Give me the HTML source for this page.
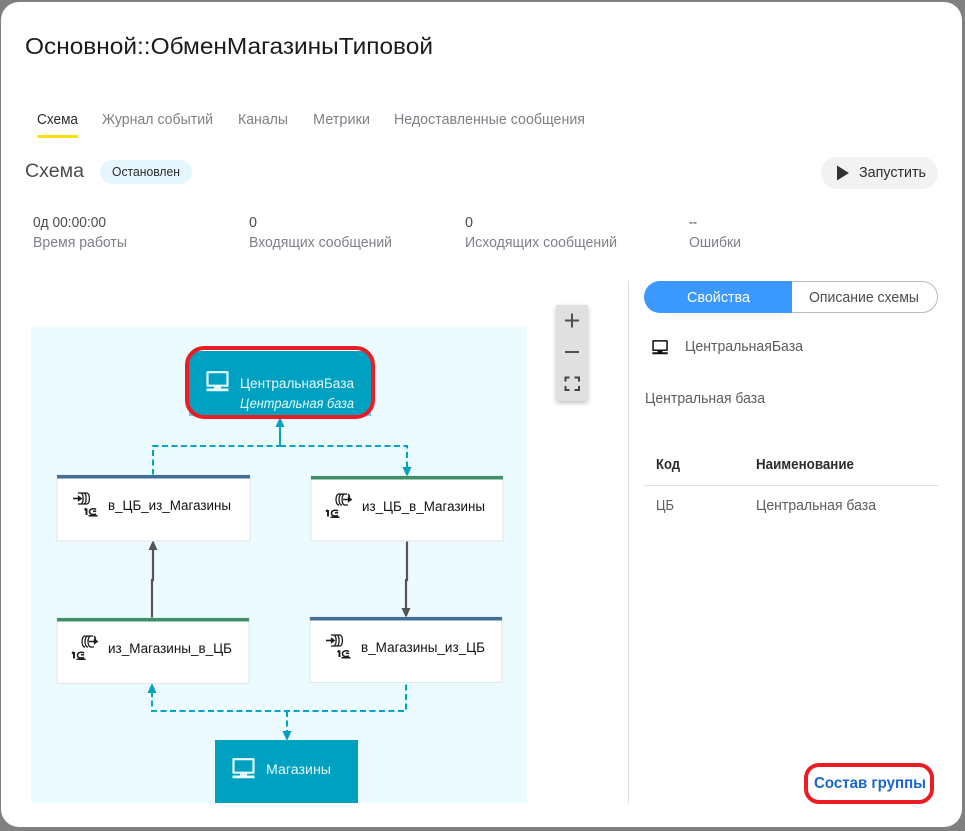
<!DOCTYPE html>
<html><head><meta charset="utf-8"><style>
html,body{margin:0;padding:0;background:#808080;width:965px;height:831px;overflow:hidden}
svg{display:block}
text{font-family:"Liberation Sans",sans-serif;white-space:pre}
</style></head><body>
<svg width="965" height="831" viewBox="0 0 965 831" xmlns="http://www.w3.org/2000/svg">
<defs>
<filter id="sh" x="-30%" y="-10%" width="160%" height="125%"><feDropShadow dx="0" dy="2" stdDeviation="2.500" flood-color="#000" flood-opacity=".25"/></filter>
<g id="mon"><path d="M1.500 1.200h20v13.500h-20z" fill="none" stroke="currentColor" stroke-width="2.200" stroke-linejoin="round"/><path d="M8 15h7v2.500H8zM0.500 17.500h22v2.800H0.500z" fill="currentColor"/></g>
<g id="qin" fill="none" stroke="#1c1c1c" stroke-width="1.300"><path d="M6 2h9M6 13h9"/><path d="M9 2c2.800 1 2.800 10 0 11M12 2c2.800 1 2.800 10 0 11M15 2c3.200 1 3.200 10 0 11"/><path d="M1 7.500h8" stroke-width="1.600"/><path d="M6.500 5.500l2.800 2-2.800 2z" fill="#1c1c1c"/><path d="M14.500 17.500v6.500M14.500 17.500l-2 1.500" stroke-width="1.900"/><path d="M24 18.500c-1.500-1.200-6.500-1.200-6.500 2.200s4.500 3 6.500 2.300M21 20.500c1.300-.5 2.500-.3 3 .3M16.500 24.800h9" stroke-width="1.500"/></g>
<g id="qout" fill="none" stroke="#1c1c1c" stroke-width="1.300"><path d="M14 2c-4 0-4 11 0 11M17 2c-4 0-4 11 0 11M20 2c-4 0-4 11 0 11h3M14 2h8"/><path d="M23 2c1 1 1.500 2 1.500 3.500M18 7.500h6.500" stroke-width="1.500"/><path d="M23.500 5.500l2.800 2-2.800 2z" fill="#1c1c1c"/><path d="M3 18v6.500M3 18l-2 1.500" stroke-width="1.900"/><path d="M13 19c-1.500-1.200-6.500-1.200-6.500 2.200s4.500 3 6.500 2.300M10 21c1.300-.5 2.500-.3 3 .3M5.500 25.300h9" stroke-width="1.500"/></g>
</defs>
<rect x="1" y="2" width="961" height="825" rx="18" fill="#fff"/>

<text x="25" y="54" font-size="23" fill="#1c1c1c" textLength="408" lengthAdjust="spacingAndGlyphs">Основной::ОбменМагазиныТиповой</text>

<g font-size="14.500" fill="#7f7f88">
<text x="37" y="124" fill="#2c2c2c" textLength="41" lengthAdjust="spacingAndGlyphs">Схема</text>
<text x="102" y="124" textLength="111" lengthAdjust="spacingAndGlyphs">Журнал событий</text>
<text x="238" y="124" textLength="50" lengthAdjust="spacingAndGlyphs">Каналы</text>
<text x="313" y="124" textLength="57" lengthAdjust="spacingAndGlyphs">Метрики</text>
<text x="394" y="124" textLength="191" lengthAdjust="spacingAndGlyphs">Недоставленные сообщения</text>
</g>
<rect x="37" y="135" width="41" height="3" rx="1.500" fill="#fadf0f"/>

<text x="25" y="177" font-size="19" fill="#4c4c4c" textLength="59" lengthAdjust="spacingAndGlyphs">Схема</text>
<rect x="100" y="160" width="92" height="24" rx="12" fill="#e6f6ff"/>
<text x="112" y="176" font-size="12.500" fill="#2c2c2c" textLength="68" lengthAdjust="spacingAndGlyphs">Остановлен</text>

<rect x="821" y="157" width="117" height="32" rx="16" fill="#f2f2f2"/>
<path d="M837 165.500l12 7.500-12 7.500z" fill="#333"/>
<text x="859" y="177" font-size="14.500" fill="#2c2c2c" textLength="67" lengthAdjust="spacingAndGlyphs">Запустить</text>

<g font-size="14.500" fill="#7f7f88">
<text x="33" y="227" fill="#4c4c4c" textLength="73" lengthAdjust="spacingAndGlyphs">0д 00:00:00</text>
<text x="33" y="247" textLength="94" lengthAdjust="spacingAndGlyphs">Время работы</text>
<text x="249" y="227" fill="#4c4c4c" textLength="8" lengthAdjust="spacingAndGlyphs">0</text>
<text x="249" y="247" textLength="143" lengthAdjust="spacingAndGlyphs">Входящих сообщений</text>
<text x="465" y="227" fill="#4c4c4c" textLength="8" lengthAdjust="spacingAndGlyphs">0</text>
<text x="465" y="247" textLength="152" lengthAdjust="spacingAndGlyphs">Исходящих сообщений</text>
<text x="689" y="227" fill="#4c4c4c" textLength="8" lengthAdjust="spacingAndGlyphs">--</text>
<text x="689" y="247" textLength="52" lengthAdjust="spacingAndGlyphs">Ошибки</text>
</g>

<rect x="628" y="281" width="1" height="522" fill="#ddd"/>

<path d="M660 281.500H922a15.500 15.500 0 0 1 0 31H660z" fill="#fff" stroke="#bbb"/>
<path d="M660 281H792V313H660a16 16 0 0 1 0-32z" fill="#3a98ff"/>
<text x="687" y="302" font-size="14.500" fill="#fff" textLength="63" lengthAdjust="spacingAndGlyphs">Свойства</text>
<text x="809" y="302" font-size="14.500" fill="#4c4c4c" textLength="110" lengthAdjust="spacingAndGlyphs">Описание схемы</text>

<g transform="translate(652 340) scale(.7)" color="#111"><use href="#mon"/></g>
<text x="685" y="351" font-size="14.500" fill="#5c5c5c" textLength="118" lengthAdjust="spacingAndGlyphs">ЦентральнаяБаза</text>
<text x="645" y="403" font-size="14.500" fill="#5c5c5c" textLength="120" lengthAdjust="spacingAndGlyphs">Центральная база</text>

<text x="656" y="469" font-size="14.500" font-weight="bold" fill="#2c2c2c" textLength="24" lengthAdjust="spacingAndGlyphs">Код</text>
<text x="756" y="469" font-size="14.500" font-weight="bold" fill="#2c2c2c" textLength="98" lengthAdjust="spacingAndGlyphs">Наименование</text>
<rect x="644" y="485" width="294" height="1" fill="#e0e0e0"/>
<text x="656" y="510" font-size="14.500" fill="#5c5c5c" textLength="18" lengthAdjust="spacingAndGlyphs">ЦБ</text>
<text x="756" y="510" font-size="14.500" fill="#5c5c5c" textLength="120" lengthAdjust="spacingAndGlyphs">Центральная база</text>

<text x="814" y="788" font-size="16" font-weight="bold" fill="#1a66d0" textLength="112" lengthAdjust="spacingAndGlyphs">Состав группы</text>
<rect x="806" y="765" width="126" height="37" rx="13" fill="none" stroke="#ed1c24" stroke-width="4"/>

<!-- Diagram -->
<rect x="31" y="327" width="496" height="476" fill="#ebfbff"/>

<!-- edges -->
<g fill="none" stroke="#00a4c4" stroke-width="2" stroke-dasharray="6 3.500">
<path d="M153 475V446H280"/>
<path d="M280 446H407V468"/>
<path d="M152 691V711H406V683"/>
<path d="M287 711V733"/>
</g>
<path d="M280 446V425" stroke="#00a4c4" stroke-width="2" fill="none"/>
<g fill="#00a0c0">
<path d="M280 417l-4.500 10h9z"/>
<path d="M407 477l-4.500-10h9z"/>
<path d="M152 683l-4.500 10h9z"/>
<path d="M287 741l-4.500-10h9z"/>
</g>
<g fill="none" stroke="#555" stroke-width="2.200">
<path d="M152 618V580H153V548"/>
<path d="M407 541V580H406V610"/>
</g>
<g fill="#555">
<path d="M153 540l-4.500 10h9z"/>
<path d="M406 618l-4.500-10h9z"/>
</g>

<!-- top node -->
<rect x="189" y="351" width="182" height="65" rx="11" fill="#00a0c0"/>
<path d="M189 406v10h11zM371 406v10h-11z" fill="#00a0c0" opacity=".55"/>
<rect x="187" y="348" width="186" height="69" rx="17" fill="none" stroke="#ed1c24" stroke-width="4"/>
<g transform="translate(206 371)" color="#eafcff"><use href="#mon"/></g>
<text x="240" y="388" font-size="13.500" fill="#e6f9fd" textLength="114" lengthAdjust="spacingAndGlyphs">ЦентральнаяБаза</text>
<text x="240" y="408" font-size="13.500" font-style="italic" fill="#e6f9fd" textLength="114" lengthAdjust="spacingAndGlyphs">Центральная база</text>

<!-- process nodes -->
<rect x="57" y="475" width="193" height="66" fill="#fff" stroke="#e2e6e6"/>
<rect x="57" y="475" width="193" height="3.500" fill="#3f6f96"/>
<g transform="translate(72 491)"><use href="#qin"/></g>
<text x="108" y="510" font-size="13.500" fill="#111" textLength="123" lengthAdjust="spacingAndGlyphs">в_ЦБ_из_Магазины</text>

<rect x="311" y="476" width="192" height="65" fill="#fff" stroke="#e2e6e6"/>
<rect x="311" y="476" width="192" height="3.500" fill="#3f9068"/>
<g transform="translate(325 492)"><use href="#qout"/></g>
<text x="362" y="511" font-size="13.500" fill="#111" textLength="123" lengthAdjust="spacingAndGlyphs">из_ЦБ_в_Магазины</text>

<rect x="57" y="618" width="192" height="65.500" fill="#fff" stroke="#e2e6e6"/>
<rect x="57" y="618" width="192" height="3.500" fill="#3f9068"/>
<g transform="translate(71 634)"><use href="#qout"/></g>
<text x="108" y="653" font-size="13.500" fill="#111" textLength="124" lengthAdjust="spacingAndGlyphs">из_Магазины_в_ЦБ</text>

<rect x="310" y="617" width="192" height="65.500" fill="#fff" stroke="#e2e6e6"/>
<rect x="310" y="617" width="192" height="3.500" fill="#3f6f96"/>
<g transform="translate(325 633)"><use href="#qin"/></g>
<text x="361" y="652" font-size="13.500" fill="#111" textLength="124" lengthAdjust="spacingAndGlyphs">в_Магазины_из_ЦБ</text>

<!-- bottom node -->
<rect x="215" y="740" width="143" height="63" fill="#00a0c0"/>
<g transform="translate(232 758)" color="#eafcff"><use href="#mon"/></g>
<text x="266" y="774" font-size="13.500" fill="#e6f9fd" textLength="65" lengthAdjust="spacingAndGlyphs">Магазины</text>

<!-- zoom control -->
<rect x="556" y="305" width="32" height="96" rx="2" fill="#e0e0e0" filter="url(#sh)"/>
<path d="M565 320.500h14M572 313.500v14M565 352h14" stroke="#505050" stroke-width="2" fill="none"/>
<path d="M565.500 381.500v-4h4M574.500 377.500h4.500v4M579 386v4h-4.500M569.500 390h-4v-4" stroke="#444" stroke-width="2" fill="none"/>
</svg>
</body></html>
